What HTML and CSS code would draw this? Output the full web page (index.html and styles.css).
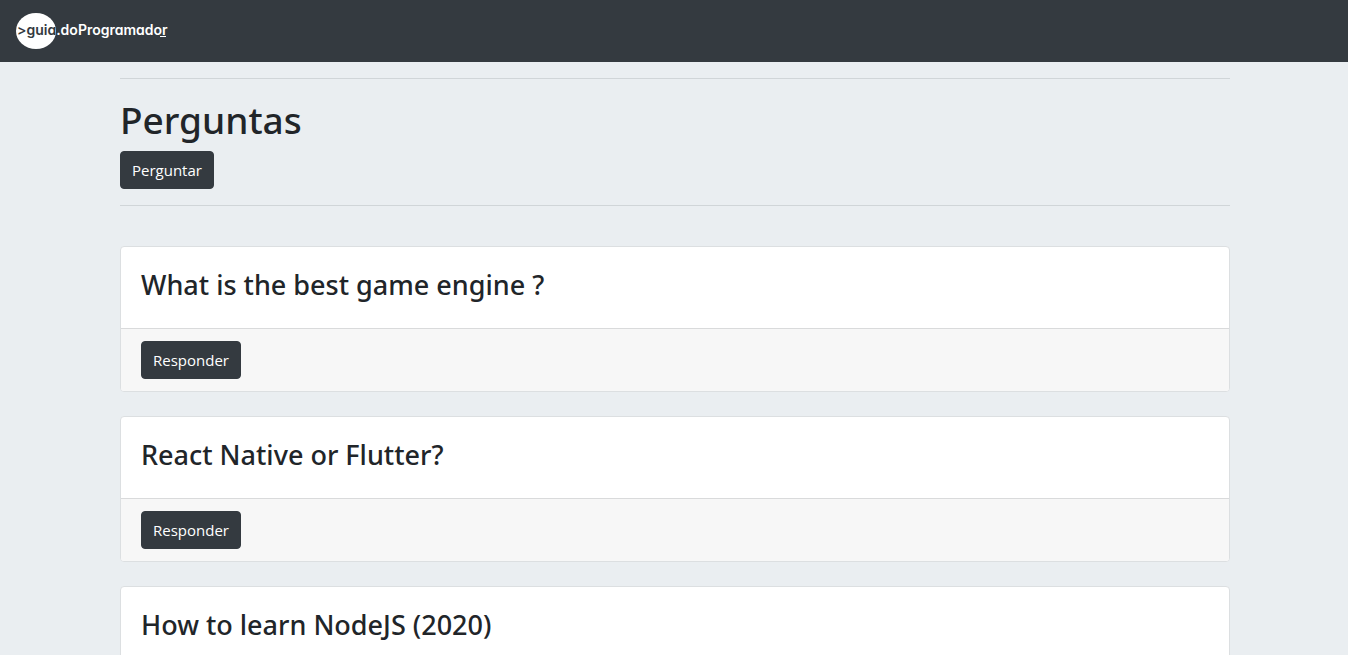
FILE: index.html
```html
<!DOCTYPE html>
<html lang="pt-br">
<head>
<meta charset="utf-8">
<meta name="viewport" content="width=device-width, initial-scale=1">
<title>Guia Perguntas</title>
<link rel="stylesheet" href="styles.css">
</head>
<body>
<nav class="navbar">
  <a class="brand" href="#" aria-label="guia.doProgramador">
    <svg class="logo" width="152" height="38" viewBox="0 0 152 38">
      <ellipse cx="20" cy="19" rx="20" ry="18" fill="#fff"/>
      <text class="logo-text" x="1" y="23"><tspan class="logo-dark">&gt;guia</tspan>.doProgramador</text>
      <path d="M144 24.5h6" stroke="#fff"/>
    </svg>
  </a>
</nav>
<main class="container">
  <hr class="rule">
  <h1 class="title">Perguntas</h1>
  <button class="btn" type="button">Perguntar</button>
  <hr class="rule">
  <div class="cards">
    <article class="card">
      <div class="card-body"><h3 class="question">What is the best game engine ?</h3></div>
      <div class="card-footer"><button class="btn" type="button">Responder</button></div>
    </article>
    <article class="card">
      <div class="card-body"><h3 class="question">React Native or Flutter?</h3></div>
      <div class="card-footer"><button class="btn" type="button">Responder</button></div>
    </article>
    <article class="card">
      <div class="card-body"><h3 class="question">How to learn NodeJS (2020)</h3></div>
      <div class="card-footer"><button class="btn" type="button">Responder</button></div>
    </article>
  </div>
</main>
</body>
</html>
```
FILE: styles.css
```css
* { box-sizing: border-box; }
body {
  margin: 0;
  background: #eaeef1;
  color: #212529;
  font-family: "Segoe UI", "Open Sans", "Noto Sans", sans-serif;
  font-size: 16px;
  line-height: 24px;
}
.navbar {
  display: flex;
  align-items: center;
  padding: 12px 16px;
  background: #343a40;
}
.brand, .logo { display: block; }
.logo-text {
  fill: #fff;
  font: 600 14px Inter, sans-serif;
  font-feature-settings: "cv11";
}
.logo-dark { fill: #343a40; }
.container {
  max-width: 1140px;
  margin: 0 auto;
  padding: 0 14px 0 16px;
}
.rule {
  margin: 16px 0;
  border: 0;
  border-top: 1px solid #d0d5d8;
}
.title, .question {
  font-family: "Segoe UI", "Noto Sans", sans-serif;
  font-weight: 500;
}
.title {
  margin: 0 0 6px;
  font-size: 37px;
  line-height: 50px;
}
.btn {
  display: inline-block;
  padding: 6px 11px;
  border: 1px solid #343a40;
  border-radius: 4px;
  background: #343a40;
  color: #fff;
  font: inherit;
  font-size: 15px;
  line-height: 24px;
  cursor: pointer;
}
.title + .btn { display: block; }
.cards {
  display: grid;
  gap: 24px;
  padding: 24px 0;
}
.card {
  border: 1px solid #dcdfe1;
  border-radius: 4px;
  background: #fff;
  overflow: hidden;
}
.card-body { padding: 20px; }
.question {
  margin: 0 0 6px;
  font-size: 27px;
  line-height: 35px;
}
.card-footer {
  display: flex;
  padding: 12px 20px;
  border-top: 1px solid #d9dadb;
  background: #f7f7f7;
}
```
